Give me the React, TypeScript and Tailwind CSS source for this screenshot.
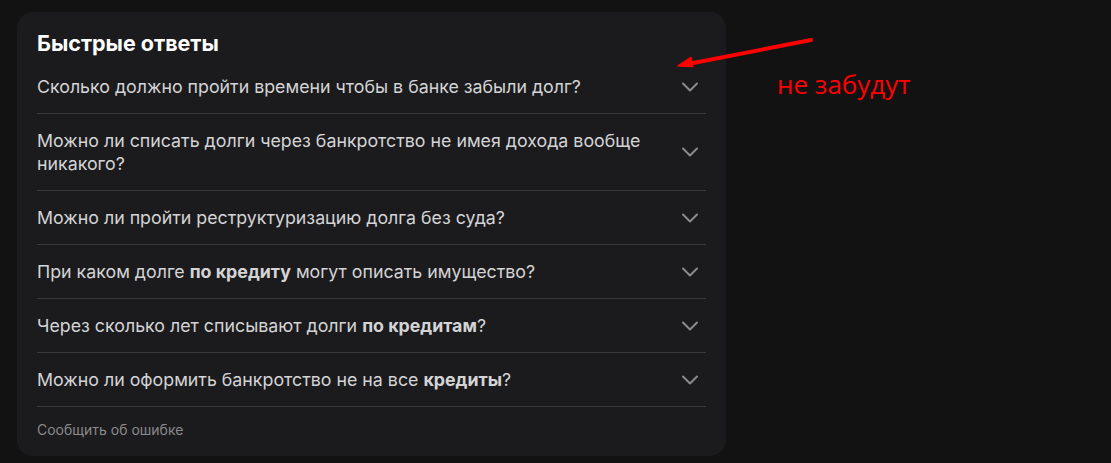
import type { ReactNode } from 'react';

const questions: ReactNode[] = [
  'Сколько должно пройти времени чтобы в банке забыли долг?',
  'Можно ли списать долги через банкротство не имея дохода вообще никакого?',
  'Можно ли пройти реструктуризацию долга без суда?',
  <>
    При каком долге <b className="font-bold">по кредиту</b> могут описать имущество?
  </>,
  <>
    Через сколько лет списывают долги <b className="font-bold">по кредитам</b>?
  </>,
  <>
    Можно ли оформить банкротство не на все <b className="font-bold">кредиты</b>?
  </>,
];

function Chevron() {
  return (
    <svg width="16" height="10" viewBox="0 0 16 10" fill="none" className="shrink-0">
      <path d="M1 1.5l7 7 7-7" stroke="#8b8b8e" strokeWidth="2" strokeLinecap="round" strokeLinejoin="round" />
    </svg>
  );
}

function QuestionRow({ children }: { children: ReactNode }) {
  return (
    <div className="flex items-center justify-between gap-6 border-b border-[#3a3a3d] py-[15px] pr-2">
      <p className="text-[17.8px] leading-[23px] text-[#d4d4d6]">{children}</p>
      <Chevron />
    </div>
  );
}

export default function App() {
  return (
    <div className="relative h-[463px] w-[1111px] overflow-hidden bg-[#121212] pt-3 font-['Inter',sans-serif]">
      <div className="ml-[17px] w-[709px] rounded-2xl bg-[#1b1b1d] px-5 pt-[18px]">
        <h2 className="mb-1 text-[21.5px] font-bold leading-[26px] text-white">Быстрые ответы</h2>
        <div>
          {questions.map((q, i) => (
            <QuestionRow key={i}>{q}</QuestionRow>
          ))}
        </div>
        <p className="pb-[17px] pt-[14px] text-[14px] leading-[18px] text-[#8a8a8c]">Сообщить об ошибке</p>
      </div>

      <svg className="absolute left-[670px] top-[30px]" width="150" height="45" viewBox="670 30 150 45" fill="none">
        <line x1="811" y1="40" x2="688" y2="64" stroke="#ff0000" strokeWidth="4" strokeLinecap="round" />
        <path d="M678 66l13-8.5 1.8 9z" fill="#ff0000" stroke="#ff0000" strokeWidth="1.5" strokeLinejoin="round" />
      </svg>
      <p className="absolute left-[777px] top-[68px] font-['Open_Sans',sans-serif] text-[26px] leading-[32px] text-[#ff0000]">
        не забудут
      </p>
    </div>
  );
}
